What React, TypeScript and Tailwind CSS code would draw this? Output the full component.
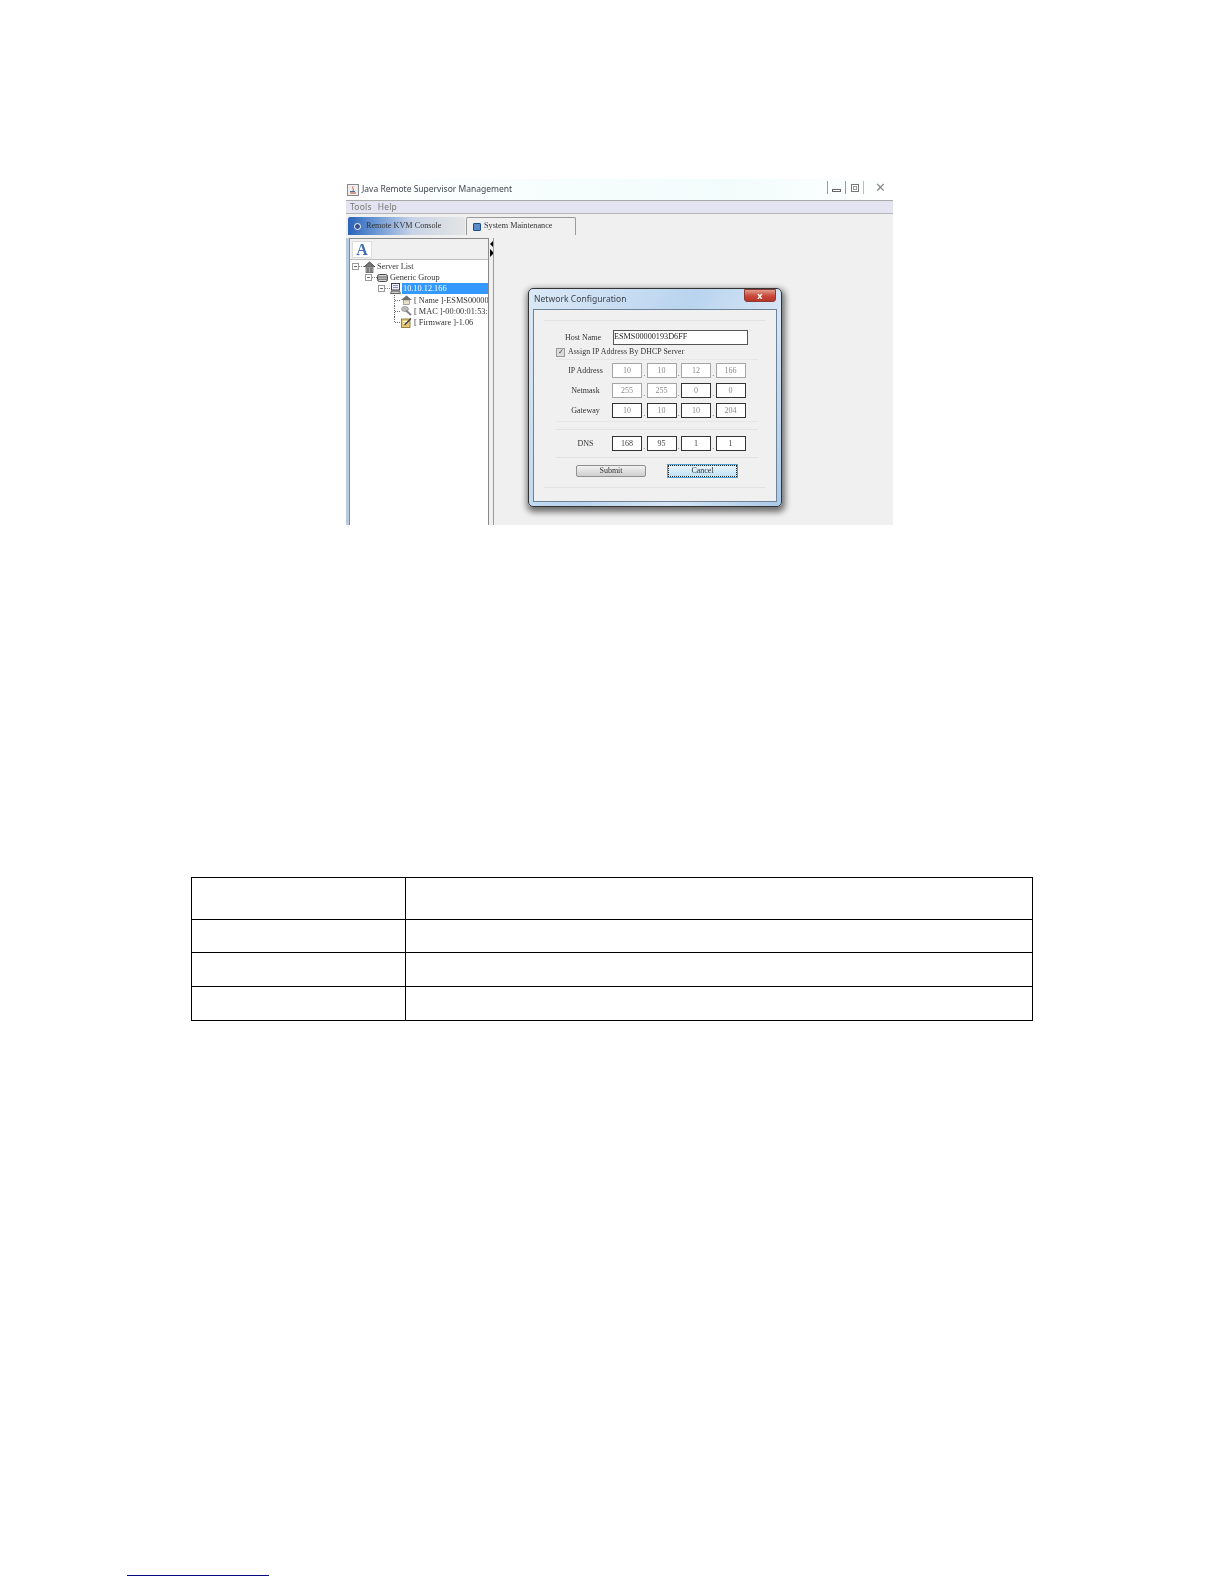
import type { ReactNode } from "react";

const serif = "font-['Liberation_Serif',serif]";

type TreeRowProps = {
  indent: string;
  icon: ReactNode;
  label: string;
  expander?: boolean;
  selected?: boolean;
  last?: boolean;
  leaf?: boolean;
};

function Expander() {
  return (
    <svg width="12" height="11" viewBox="0 0 12 11" className="shrink-0">
      <rect x="0.5" y="2.5" width="6" height="6" fill="#fff" stroke="#9a9a9a" />
      <path d="M2 5.5h3" stroke="#666" />
      <path d="M7 5.5h5" stroke="#8a8a8a" strokeDasharray="1 1" />
    </svg>
  );
}

// dotted branch in front of a leaf of the tree
function Branch({ last }: { last?: boolean }) {
  return (
    <svg width="7" height="11.2" viewBox="0 0 7 11.2" className="shrink-0">
      <path d={last ? "M0.5 0v6" : "M0.5 0v11.2"} stroke="#666" strokeDasharray="1 1" />
      <path d="M1 5.5h6" stroke="#666" strokeDasharray="1 1" />
    </svg>
  );
}

function HomeIcon() {
  return (
    <svg width="11" height="12" viewBox="0 0 11 12" className="shrink-0">
      <path d="M0 6 5.5 1 11 6" fill="#777" stroke="#444" />
      <rect x="2" y="6" width="7" height="6" fill="#b5b5b5" stroke="#555" strokeWidth="0.7" />
      <path d="M4 7v5M7 7v5" stroke="#444" />
    </svg>
  );
}

function GroupIcon() {
  return (
    <svg width="11" height="8" viewBox="0 0 11 8" className="shrink-0">
      <rect x="0.5" y="0.5" width="10" height="7" rx="2" fill="#dcdcdc" stroke="#444" />
      <path d="M1 3h9M1 5.2h9" stroke="#555" />
    </svg>
  );
}

function ServerIcon() {
  return (
    <svg width="11" height="11" viewBox="0 0 11 11" className="shrink-0">
      <rect x="1.5" y="0.5" width="8" height="6.5" fill="#eef" stroke="#444" />
      <path d="M3 2.5h5M3 4.5h5" stroke="#8a94b8" />
      <path d="M0.5 10.5 1.5 8h8l1 2.5z" fill="#ccc" stroke="#444" strokeWidth="0.8" />
    </svg>
  );
}

function NameIcon() {
  return (
    <svg width="11" height="10" viewBox="0 0 11 10" className="shrink-0">
      <path d="M0 5 5.5 0.5 11 5z" fill="#6f6f6f" />
      <rect x="2.5" y="5" width="6" height="4.5" fill="#e8e0c8" stroke="#777" strokeWidth="0.6" />
    </svg>
  );
}

function MacIcon() {
  return (
    <svg width="11" height="10" viewBox="0 0 11 10" className="shrink-0">
      <ellipse cx="4" cy="3" rx="3.5" ry="2.5" fill="#bbb" stroke="#888" strokeWidth="0.6" />
      <path d="M5 4.5 10 9" stroke="#888" strokeWidth="2" />
      <path d="M6 5.5 10 9" stroke="#77a" strokeWidth="0.7" />
    </svg>
  );
}

function FirmwareIcon() {
  return (
    <svg width="11" height="11" viewBox="0 0 11 11" className="shrink-0">
      <rect x="0.5" y="2" width="8.5" height="8.5" fill="#e9c873" stroke="#806a30" strokeWidth="0.8" />
      <path d="M2 4.5h5M2 6.5h3" stroke="#fff" />
      <path d="M3.5 8 10 1.5" stroke="#444" strokeWidth="1.4" />
    </svg>
  );
}

function TreeRow({ indent, icon, label, expander, selected, last, leaf }: TreeRowProps) {
  return (
    <div className={`flex h-[11.2px] items-center ${indent}`}>
      {expander && <Expander />}
      {leaf && <Branch last={last} />}
      <span className="mr-px flex w-[11px] shrink-0 justify-center">{icon}</span>
      <span className={`whitespace-nowrap px-px text-[8.3px] leading-[11px] ${selected ? "w-[86px] bg-[#3399ff] text-white" : "text-[#333]"}`}>
        {label}
      </span>
    </div>
  );
}

function OctetRow({ label, values, dimmed, dark }: { label: string; values: string[]; dimmed: number[]; dark?: boolean }) {
  return (
    <div className="flex h-[15px] items-center">
      <span className="w-[56px] pl-[3px] text-center text-[8px] leading-none text-[#333]">{label}</span>
      <div className="flex items-end">
        {values.map((value, i) => (
          <div key={i} className="flex items-end">
            {i > 0 && <span className="w-[4.5px] text-center text-[8px] leading-[9px] text-[#555]">.</span>}
            <span
              className={`flex h-[15px] w-[30px] items-center justify-center border bg-white text-[8px] leading-none ${
                dimmed.includes(i) ? "border-[#a5a5a5]" : "border-[#333]"
              } ${dark ? "text-[#444]" : "text-[#8a8a8a]"}`}
            >
              {value}
            </span>
          </div>
        ))}
      </div>
    </div>
  );
}

function NetworkDialog() {
  return (
    <div className="absolute left-[182px] top-[53px] h-[219px] w-[254px] rounded-[5px] border border-[#333] bg-[linear-gradient(120deg,#dbe9f7_0%,#b9d4ef_45%,#d7e6f5_70%,#a9c8e8_100%)] px-[4px] pb-[3px] shadow-[1px_3px_6px_2px_rgba(20,20,20,0.6)]">
      <div className="relative flex h-[20px] items-center pl-[1px] font-['Noto_Sans',sans-serif] text-[8.5px] tracking-[0.05px] text-[#3a3f46]">
        Network Configuration
        <span className="absolute right-[1px] top-0 flex h-[13px] w-[32px] items-center justify-center rounded-b-[3px] border border-[#8a3a32] bg-[linear-gradient(#e09a8c,#c9483a_55%,#b8352a)] text-[9px] font-bold leading-none text-white">
          x
        </span>
      </div>
      <div className={`h-[193px] border border-[#6f8296] bg-[#f0f0f0] px-[10px] pt-[10px] ${serif}`}>
        <div className="h-[168px] border-y border-[#e2e2e2] pl-[12px] pr-[5px]">
          <div className="flex h-[24px] items-end">
            <span className="w-[57px] pb-px pr-[3px] text-center text-[8px] leading-[13px] text-[#333]">Host Name</span>
            <span className="flex h-[15px] w-[135px] items-center border border-[#555] bg-white text-[8.2px] leading-none text-[#222]">
              ESMS00000193D6FF
            </span>
          </div>
          <div className="mt-[2px] flex h-[10px] items-center gap-[3px]">
            <span className="flex h-[9px] w-[9px] items-center justify-center border border-[#999] bg-[#ddd] text-[7px] leading-none text-[#444]">
              ✓
            </span>
            <span className="whitespace-nowrap text-[7.8px] leading-none tracking-[0.1px] text-[#333]">Assign IP Address By DHCP Server</span>
          </div>
          <div className="mt-[2px] flex h-[63px] w-[202px] flex-col gap-[5px] border-b border-t border-[#e6e6e6] pt-[3px]">
            <OctetRow label="IP Address" values={["10", "10", "12", "166"]} dimmed={[0, 1, 2, 3]} />
            <OctetRow label="Netmask" values={["255", "255", "0", "0"]} dimmed={[0, 1]} />
            <OctetRow label="Gateway" values={["10", "10", "10", "204"]} dimmed={[]} />
          </div>
          <div className="mt-[7px] flex h-[29px] w-[202px] items-center border-y border-[#e2e2e2]">
            <OctetRow label="DNS" values={["168", "95", "1", "1"]} dimmed={[]} dark />
          </div>
          <div className="mt-[7px] flex">
            <span className="ml-[20px] flex h-[12px] w-[70px] items-center justify-center rounded-[2px] border border-[#8f8f8f] bg-[linear-gradient(#f2f2f2,#cfcfcf)] text-[8px] leading-none text-[#333]">
              Submit
            </span>
            <span className="ml-[22px] flex h-[12px] w-[69px] items-center justify-center border border-dotted border-[#222] bg-[linear-gradient(#e8f5fc,#bfe2f5)] text-[8px] leading-none text-[#333] outline outline-[#4aa3d8]">
              Cancel
            </span>
          </div>
        </div>
      </div>
    </div>
  );
}

function TitleBar() {
  return (
    <div className="flex h-[22px] items-center border-b border-[#a9a9a9] bg-[linear-gradient(90deg,#ffffff,#f6fdfd_40%,#f2fcfb_70%,#ffffff)] pl-[1px]">
      <svg width="12" height="12" viewBox="0 0 12 12" className="mr-[3px] shrink-0">
        <rect x="0.5" y="0.5" width="11" height="11" fill="#eee" stroke="#888" />
        <path d="M3 9h6M6 2.5C4.5 4 7.5 5 6 7" stroke="#b5523a" fill="none" />
        <path d="M3 7.5h5" stroke="#4a6fa5" />
      </svg>
      <span className="font-['Noto_Sans',sans-serif] text-[8.5px] text-[#3f4650]">Java Remote Supervisor Management</span>
      <div className="ml-auto flex h-[17px] items-center self-start text-[#666]">
        <span className="flex h-[13px] w-[19px] items-end justify-center border-l border-r border-[#999] pb-[2px]">
          <span className="h-[3px] w-[9px] border border-[#666]" />
        </span>
        <span className="flex h-[13px] w-[18px] items-center justify-center border-r border-[#bbb]">
          <span className="flex h-[8px] w-[8px] items-center justify-center border border-[#777]">
            <span className="h-[4px] w-[4px] border border-[#999]" />
          </span>
        </span>
        <span className="flex h-[13px] w-[29px] items-center justify-center pl-[3px] text-[13px] leading-none text-[#888]">✕</span>
      </div>
    </div>
  );
}

function Tabs() {
  return (
    <div className="flex gap-px pl-[2px] pt-[3px]">
      <div className="flex h-[18px] w-[117px] items-center rounded-t-[2px] bg-[linear-gradient(90deg,#2a62b8,#6f9ad6_25%,#c9d4e6_55%,#e4e4e4)] pl-[6px]">
        <span className="mr-[5px] flex h-[7px] w-[7px] items-center justify-center rounded-full border border-white bg-[#35518a]" />
        <span className={`${serif} whitespace-nowrap text-[8.2px] leading-none text-[#333]`}>Remote KVM Console</span>
      </div>
      <div className="flex h-[18px] w-[110px] items-center rounded-t-[2px] border border-b-0 border-[#9a9a9a] bg-[#f0f0f0] pl-[6px]">
        <span className="mr-[3px] h-[8px] w-[8px] rounded-[1px] border border-[#1c4d8c] bg-[#5b8cc8]" />
        <span className={`${serif} whitespace-nowrap text-[8.2px] leading-none text-[#333]`}>System Maintenance</span>
      </div>
    </div>
  );
}

function ServerTree() {
  return (
    <div className={`h-full w-[140px] overflow-hidden border-x border-t border-[#8a8a8a] bg-white ${serif}`}>
      <div className="flex h-[21px] items-end border-b border-[#bdbdbd] bg-[#f0f0f0] pb-px pl-[2px]">
        <span className="flex h-[17px] w-[20px] items-center justify-center border border-[#ddd] bg-white text-[16px] font-bold leading-none text-[#3f6db0]">
          A
        </span>
      </div>
      <div className="pt-px">
        <TreeRow indent="pl-[2px]" expander icon={<HomeIcon />} label="Server List" />
        <TreeRow indent="pl-[15px]" expander icon={<GroupIcon />} label="Generic Group" />
        <TreeRow indent="pl-[28px]" expander icon={<ServerIcon />} label="10.10.12.166" selected />
        <TreeRow indent="pl-[44px]" leaf icon={<NameIcon />} label="[ Name ]-ESMS00000" />
        <TreeRow indent="pl-[44px]" leaf icon={<MacIcon />} label="[ MAC ]-00:00:01:53:" />
        <TreeRow indent="pl-[44px]" leaf last icon={<FirmwareIcon />} label="[ Firmware ]-1.06" />
      </div>
    </div>
  );
}

function AppWindow() {
  return (
    <div className="ml-[346px] flex h-[346px] w-[547px] flex-col overflow-hidden bg-[#f0f0f0] blur-[0.4px]">
      <TitleBar />
      <div className="flex h-[13px] items-center border-b border-[#b5b5b5] bg-[#e3e3f2] pl-[4px] font-['Noto_Sans',sans-serif] text-[8.5px] tracking-[0.2px] text-[#777]">
        <span className="mr-[6px]">Tools</span>
        <span>Help</span>
      </div>
      <Tabs />
      <div className="relative flex min-h-0 flex-1 pt-[3px]">
        <div className="w-[3px] shrink-0 bg-[#b9cbe0]" />
        <ServerTree />
        <div className="flex w-[4px] shrink-0 flex-col gap-[1px] pl-[1px] pt-[2px]">
          <span className="h-0 w-0 border-y-[4px] border-r-[4px] border-y-transparent border-r-black" />
          <span className="h-0 w-0 border-y-[4px] border-l-[4px] border-y-transparent border-l-black" />
        </div>
        <div className="flex-1 border-l border-[#9a9a9a]" />
        <NetworkDialog />
      </div>
    </div>
  );
}

function SpecTable() {
  const rows = ["h-[42px]", "h-[33px]", "h-[34px]", "h-[34px]"];
  return (
    <table className="ml-[191px] mt-[352px] w-[842px] table-fixed border-collapse">
      <tbody>
        {rows.map((height, i) => (
          <tr key={i} className={height}>
            <td className="w-[214px] border border-black" />
            <td className="border border-black" />
          </tr>
        ))}
      </tbody>
    </table>
  );
}

export default function App() {
  return (
    <div className="flex h-[1584px] w-[1224px] flex-col bg-white pt-[179px]">
      <AppWindow />
      <SpecTable />
      <div className="ml-[127px] mt-[554px] h-[1px] w-[142px] bg-[#0a0a80]" />
    </div>
  );
}
